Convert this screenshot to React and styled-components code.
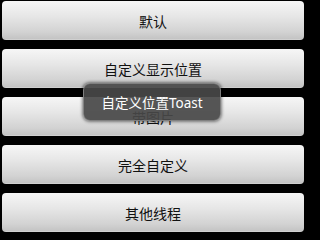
import React from "react";
import styled, { createGlobalStyle } from "styled-components";

const GlobalStyle = createGlobalStyle`
  html, body {
    margin: 0;
    padding: 0;
    background: #000;
  }
  body {
    font-family: "Noto Sans", "Noto Sans CJK SC", sans-serif;
  }
`;

const buttons = ["默认", "自定义显示位置", "带图片", "完全自定义", "其他线程"];

const App = () => {
  return (
    <>
      <GlobalStyle />
      <Screen>
        <ButtonList>
          {buttons.map((label) => (
            <Button key={label}>{label}</Button>
          ))}
        </ButtonList>
        <Toast>自定义位置Toast</Toast>
      </Screen>
    </>
  );
};

export default App;

const Screen = styled.div`
  position: relative;
  width: 311px;
  height: 238px;
  background: #000;
  overflow: hidden;
`;

const ButtonList = styled.div`
  display: flex;
  flex-direction: column;
  gap: 9px;
  padding: 1px 7px 0 2px;
`;

const Button = styled.div`
  height: 39px;
  box-sizing: border-box;
  border-radius: 4px;
  display: flex;
  align-items: center;
  justify-content: center;
  font-size: 14px;
  color: #111;
  background: linear-gradient(
    to bottom,
    #f6f6f6 0%,
    #e6e6e6 40%,
    #d2d2d2 80%,
    #c4c4c4 97%,
    #d8d8d8 100%
  );
`;

const Toast = styled.div`
  position: absolute;
  left: 83px;
  top: 83px;
  width: 138px;
  height: 38px;
  box-sizing: border-box;
  border-radius: 7px;
  border: 1px solid rgba(140, 140, 140, 0.8);
  background: rgba(72, 72, 72, 0.92);
  box-shadow: 0 0 3px 1px rgba(0, 0, 0, 0.45);
  color: #fff;
  font-size: 13.5px;
  display: flex;
  align-items: center;
  justify-content: center;
`;
